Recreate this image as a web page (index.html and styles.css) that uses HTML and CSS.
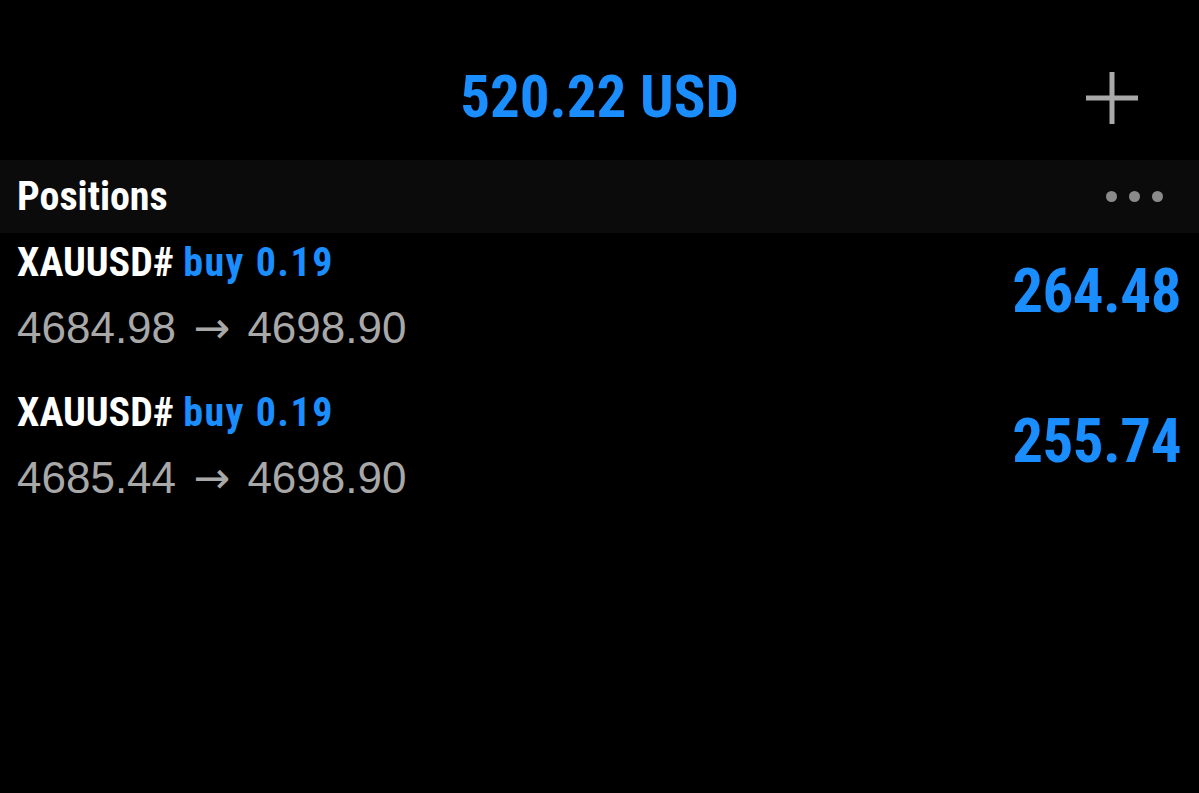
FILE: index.html
```html
<!DOCTYPE html>
<html lang="en">
<head>
    <meta charset="UTF-8">
    <meta name="viewport" content="width=device-width, initial-scale=1.0">
    <title>Trade</title>
    <link rel="stylesheet" href="styles.css">
</head>
<body>
    <header class="top-bar">
        <div class="balance">520.22 USD</div>
        <button class="add-btn" aria-label="New order">
            <svg width="52" height="52" viewBox="0 0 52 52">
                <path d="M26 0V52M0 26H52" stroke="#a9a9a9" stroke-width="5" fill="none"/>
            </svg>
        </button>
    </header>

    <div class="section-bar">
        <span class="section-title">Positions</span>
        <span class="dots">
            <i></i><i></i><i></i>
        </span>
    </div>

    <div class="positions">
        <div class="position">
            <div class="position-info">
                <div class="symbol-line">XAUUSD# <span class="side">buy 0.19</span></div>
                <div class="prices">4684.98 <span class="arrow">→</span> 4698.90</div>
            </div>
            <div class="profit">264.48</div>
        </div>
        <div class="position">
            <div class="position-info">
                <div class="symbol-line">XAUUSD# <span class="side">buy 0.19</span></div>
                <div class="prices">4685.44 <span class="arrow">→</span> 4698.90</div>
            </div>
            <div class="profit">255.74</div>
        </div>
    </div>
</body>
</html>
```

FILE: styles.css
```css
body {
    margin: 0;
    background-color: #000;
    color: #fff;
    font-family: "Roboto Condensed", "DejaVu Sans Condensed", sans-serif;
}

.top-bar {
    position: relative;
    height: 160px;
    display: flex;
    justify-content: center;
    align-items: center;
}

.balance {
    font-size: 59px;
    font-weight: bold;
    color: #1a8dff;
    line-height: 60px;
    margin-top: 34px;
}

.add-btn {
    position: absolute;
    right: 61px;
    top: 72px;
    background: none;
    border: none;
    padding: 0;
    width: 52px;
    height: 52px;
    cursor: pointer;
}

.add-btn svg {
    display: block;
}

.section-bar {
    height: 73px;
    background-color: #0b0b0b;
    display: flex;
    align-items: center;
    justify-content: space-between;
    padding: 0 36px 0 17px;
}

.section-title {
    font-size: 40px;
    font-weight: bold;
    line-height: 48px;
}

.dots {
    display: flex;
    gap: 12px;
}

.dots i {
    width: 11px;
    height: 11px;
    border-radius: 50%;
    background-color: #8a8a8a;
}

.position {
    height: 150px;
    display: flex;
    justify-content: space-between;
    align-items: flex-start;
    padding: 0 18px 0 17px;
}

.position-info {
    padding-top: 6px;
}

.symbol-line {
    font-size: 40px;
    font-weight: bold;
    line-height: 48px;
}

.side {
    color: #1a8dff;
    letter-spacing: 1.5px;
}

.prices {
    font-family: "Liberation Sans", Arial, sans-serif;
    font-size: 44px;
    color: #a8a8a8;
    line-height: 52px;
    margin-top: 15px;
}

.arrow {
    font-family: "DejaVu Sans", sans-serif;
    margin: 0 5px;
}

.profit {
    font-size: 61px;
    font-weight: bold;
    color: #1a8dff;
    letter-spacing: -0.5px;
    line-height: 62px;
    margin-top: 27px;
}
```
